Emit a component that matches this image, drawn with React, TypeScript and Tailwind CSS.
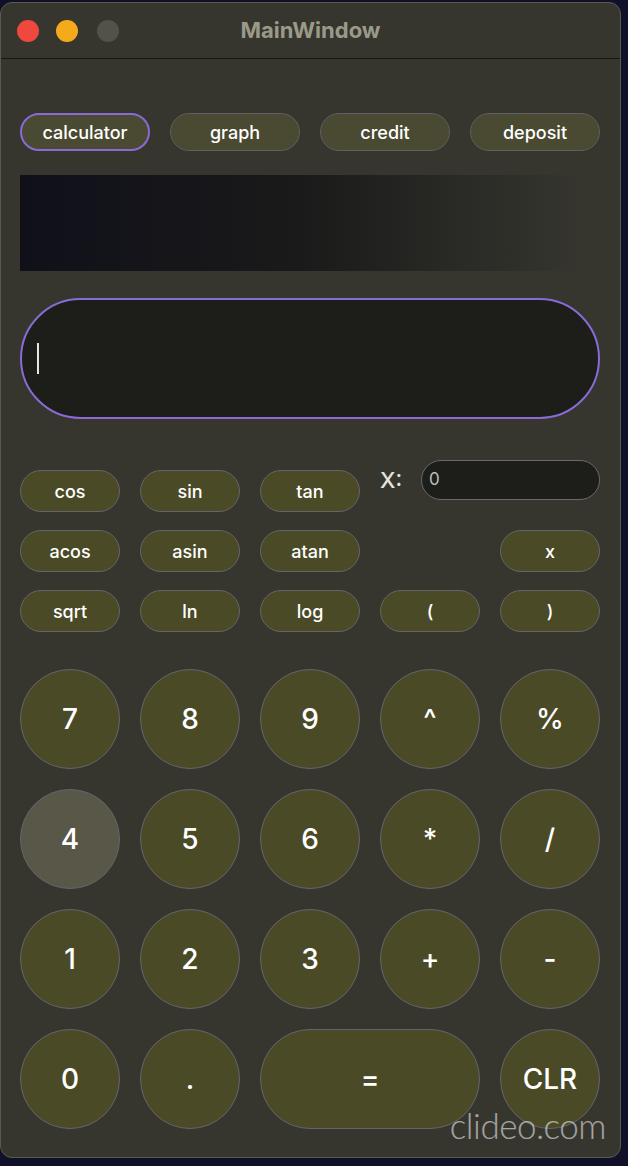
import React from "react";

const FONT = { fontFamily: 'Inter, "Liberation Sans", sans-serif' };

const PILL =
  "flex h-[42px] items-center justify-center rounded-full border border-[#65646a] bg-[#4b4a27] text-[18px] font-medium text-white";
const ROUND =
  "flex h-[100px] items-center justify-center rounded-full border border-[#65646e] bg-[#4b4a27] text-[28px] font-medium text-white";

const tabs = ["calculator", "graph", "credit", "deposit"];

const keys: { label: string; wide?: boolean; pressed?: boolean }[] = [
  { label: "7" },
  { label: "8" },
  { label: "9" },
  { label: "^" },
  { label: "%" },
  { label: "4", pressed: true },
  { label: "5" },
  { label: "6" },
  { label: "*" },
  { label: "/" },
  { label: "1" },
  { label: "2" },
  { label: "3" },
  { label: "+" },
  { label: "-" },
  { label: "0" },
  { label: "." },
  { label: "=", wide: true },
  { label: "CLR" },
];

export default function App() {
  return (
    <div
      className="h-[1166px] w-[628px] overflow-hidden bg-[#10102a] pt-[2px]"
      style={FONT}
    >
      <div className="relative flex h-[1156px] w-[621px] flex-col overflow-hidden rounded-[12px] border border-[#5a5a4c] bg-[#36362f]">
        {/* title bar */}
        <div className="grid h-[56px] shrink-0 grid-cols-[1fr_auto_1fr] items-center border-b border-[#17170f]">
          <div className="flex items-center gap-[17px] pl-[16px]">
            <span className="h-[22px] w-[22px] rounded-full bg-[#f0483e]" />
            <span className="h-[22px] w-[22px] rounded-full bg-[#f5aa1c]" />
            <span className="ml-[2px] h-[22px] w-[22px] rounded-full bg-[#525249]" />
          </div>
          <span className="text-[22px] font-bold text-[#9b9a88]">MainWindow</span>
          <div />
        </div>

        <div className="flex flex-col pl-[19px] pr-[20px]">
          {/* tabs */}
          <div className="mt-[54px] grid grid-cols-4 gap-x-5">
            {tabs.map((t, i) => (
              <button
                key={t}
                type="button"
                className={
                  "flex h-[38px] items-center justify-center rounded-full bg-[#4a4931] text-[18px] font-medium text-white " +
                  (i === 0
                    ? "border-2 border-[#8a6ad6] bg-[#3e3d33]"
                    : "border border-[#5f5e62]")
                }
              >
                {t}
              </button>
            ))}
          </div>

          {/* history area */}
          <div className="mt-[24px] h-[96px] w-[560px] bg-linear-to-r from-[#10101a] via-[#1a1a1a] to-[#36362f]" />

          {/* expression input */}
          <div className="mt-[27px] flex h-[121px] items-center rounded-full border-2 border-[#8a6ad6] bg-[#1d1d1a] pl-[15px]">
            <span className="h-[31px] w-[2px] bg-[#e6e6e6]" />
          </div>

          {/* function keys */}
          <div className="mt-[51px] grid grid-cols-5 gap-x-5 gap-y-[18px]">
            <button type="button" className={PILL}>cos</button>
            <button type="button" className={PILL}>sin</button>
            <button type="button" className={PILL}>tan</button>
            <div className="col-span-2 -mt-[10px] flex h-[40px] items-center">
              <span className="w-[41px] text-[22px] font-medium text-[#e4e4dc]">X:</span>
              <div className="flex h-[40px] flex-1 items-center rounded-full border border-[#6a6a66] bg-[#1d1d1a] pl-[7px] text-[17px] text-[#bdbdb6]">
                0
              </div>
            </div>
            <button type="button" className={PILL}>acos</button>
            <button type="button" className={PILL}>asin</button>
            <button type="button" className={PILL}>atan</button>
            <div />
            <button type="button" className={PILL}>x</button>
            <button type="button" className={PILL}>sqrt</button>
            <button type="button" className={PILL}>ln</button>
            <button type="button" className={PILL}>log</button>
            <button type="button" className={PILL}>(</button>
            <button type="button" className={PILL}>)</button>
          </div>

          {/* number keys */}
          <div className="mt-[37px] grid grid-cols-5 gap-5">
            {keys.map((k) => (
              <button
                key={k.label}
                type="button"
                className={
                  ROUND +
                  (k.wide ? " col-span-2" : "") +
                  (k.pressed ? " bg-[#585748]" : "")
                }
              >
                {k.label}
              </button>
            ))}
          </div>
        </div>

        <span
          className="absolute bottom-[6px] right-[14px] text-[35px] font-light tracking-[-0.5px] text-white/55"
          style={{ fontFamily: 'Lato, "Open Sans", sans-serif' }}
        >
          clideo.com
        </span>
      </div>
    </div>
  );
}
